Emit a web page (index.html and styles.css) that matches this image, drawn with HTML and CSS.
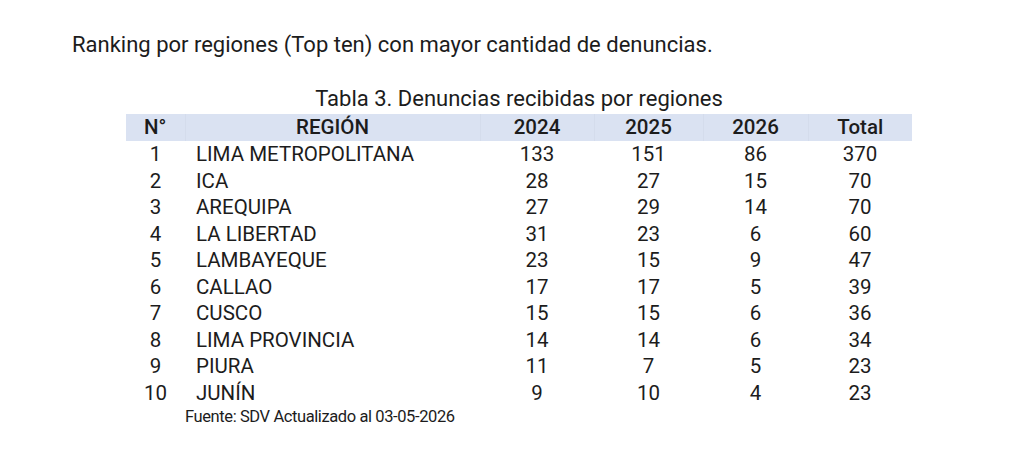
FILE: index.html
```html
<!DOCTYPE html>
<html lang="es">
<head>
<meta charset="utf-8">
<link rel="stylesheet" href="styles.css">
</head>
<body>
<div class="page">
  <p class="intro">Ranking por regiones (Top ten) con mayor cantidad de denuncias.</p>
  <div class="table-wrap">
    <div class="caption">Tabla 3. Denuncias recibidas por regiones</div>
    <table class="data">
      <colgroup>
        <col class="c-num"><col class="c-reg"><col class="c-y"><col class="c-y2"><col class="c-y3"><col class="c-tot">
      </colgroup>
      <thead>
        <tr><th>N°</th><th>REGIÓN</th><th>2024</th><th>2025</th><th>2026</th><th>Total</th></tr>
      </thead>
      <tbody>
        <tr><td>1</td><td class="reg">LIMA METROPOLITANA</td><td>133</td><td>151</td><td>86</td><td>370</td></tr>
        <tr><td>2</td><td class="reg">ICA</td><td>28</td><td>27</td><td>15</td><td>70</td></tr>
        <tr><td>3</td><td class="reg">AREQUIPA</td><td>27</td><td>29</td><td>14</td><td>70</td></tr>
        <tr><td>4</td><td class="reg">LA LIBERTAD</td><td>31</td><td>23</td><td>6</td><td>60</td></tr>
        <tr><td>5</td><td class="reg">LAMBAYEQUE</td><td>23</td><td>15</td><td>9</td><td>47</td></tr>
        <tr><td>6</td><td class="reg">CALLAO</td><td>17</td><td>17</td><td>5</td><td>39</td></tr>
        <tr><td>7</td><td class="reg">CUSCO</td><td>15</td><td>15</td><td>6</td><td>36</td></tr>
        <tr><td>8</td><td class="reg">LIMA PROVINCIA</td><td>14</td><td>14</td><td>6</td><td>34</td></tr>
        <tr><td>9</td><td class="reg">PIURA</td><td>11</td><td>7</td><td>5</td><td>23</td></tr>
        <tr><td>10</td><td class="reg">JUNÍN</td><td>9</td><td>10</td><td>4</td><td>23</td></tr>
      </tbody>
    </table>
    <div class="source">Fuente: SDV Actualizado al 03-05-2026</div>
  </div>
</div>
</body>
</html>
```

FILE: styles.css
```css
html, body {
  margin: 0;
  padding: 0;
  background: #ffffff;
}

body {
  font-family: Roboto, "Liberation Sans", sans-serif;
  color: #1c1c1c;
}

.page {
  width: 1024px;
  height: 461px;
  box-sizing: border-box;
  padding: 32px 0 0 72px;
}

.intro {
  margin: 0;
  font-size: 22px;
  line-height: 26px;
}

.table-wrap {
  margin: 30px 0 0 54px;
  width: 786px;
}

.caption {
  text-align: center;
  font-size: 22px;
  line-height: 22px;
  margin-bottom: 4px;
}

.data {
  border-collapse: collapse;
  width: 786px;
  table-layout: fixed;
  font-size: 20.5px;
}

.c-num { width: 59px; }
.c-reg { width: 295px; }
.c-y { width: 114px; }
.c-y2 { width: 109px; }
.c-y3 { width: 105px; }
.c-tot { width: 104px; }

.data th {
  background: #dae2f2;
  font-weight: 500;
  height: 27px;
  padding: 0;
  line-height: 27px;
  text-align: center;
  border-left: 1px solid #d4dcec;
}

.data th:first-child {
  border-left: none;
}

.data td {
  height: 26.5px;
  padding: 0;
  line-height: 26.5px;
  text-align: center;
}

.data td.reg {
  text-align: left;
  padding-left: 11px;
}

.source {
  font-size: 16.5px;
  letter-spacing: -0.4px;
  line-height: 20px;
  padding-left: 59px;
  margin-top: 1px;
}
```
